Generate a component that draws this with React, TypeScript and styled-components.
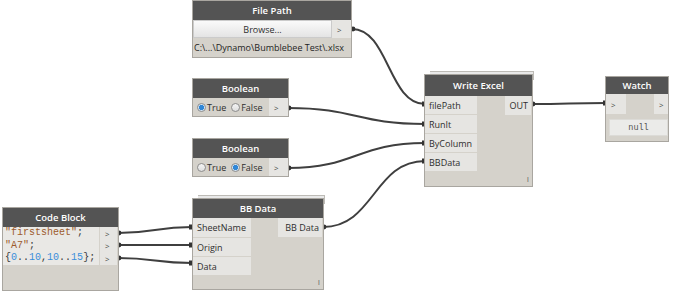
import React from 'react';
import styled, { createGlobalStyle } from 'styled-components';

const GlobalStyle = createGlobalStyle`
  html, body {
    margin: 0;
    padding: 0;
    background: #ffffff;
  }
  body {
    font-family: 'Open Sans', 'Noto Sans', sans-serif;
  }
`;

const Canvas = styled.div`
  position: relative;
  z-index: 0;
  width: 673px;
  height: 291px;
  overflow: hidden;
  background: #ffffff;
  color: #2e2e2e;
  font-size: 9px;
`;

const Wires = styled.svg`
  position: absolute;
  left: 0;
  top: 0;
`;

const Node = styled.div<{ $x: number; $y: number; $w: number; $h: number; $stacked?: boolean }>`
  position: absolute;
  left: ${(p) => p.$x}px;
  top: ${(p) => p.$y}px;
  width: ${(p) => p.$w}px;
  height: ${(p) => p.$h}px;
  box-sizing: border-box;
  background: #d5d2cb;
  border: 1px solid #a9a6a0;
  display: flex;
  flex-direction: column;

  &::before {
    content: '';
    display: ${(p) => (p.$stacked ? 'block' : 'none')};
    position: absolute;
    z-index: -1;
    top: -4px;
    left: 5px;
    right: -2px;
    height: 8px;
    background: #e9e9e9;
    border-top: 1px solid #bdbbb6;
    border-right: 1px solid #bdbbb6;
  }
`;

const Header = styled.div<{ $h: number }>`
  flex: none;
  height: ${(p) => p.$h}px;
  background: #545454;
  color: #ffffff;
  font-size: 9.5px;
  font-weight: 600;
  display: flex;
  align-items: center;
  justify-content: center;
`;

const Body = styled.div`
  display: flex;
  justify-content: space-between;
  align-items: flex-start;
`;

const PortColumn = styled.div<{ $w: number }>`
  width: ${(p) => p.$w}px;
  display: flex;
  flex-direction: column;
  gap: 1px;
  background: #d5d2cb;
`;

const InPort = styled.div<{ $h?: number }>`
  height: ${(p) => p.$h ?? 18}px;
  background: #e6e5e2;
  display: flex;
  align-items: center;
  padding-left: 4px;
  white-space: nowrap;
`;

const OutPort = styled.div<{ $w: number }>`
  width: ${(p) => p.$w}px;
  height: 19px;
  box-sizing: border-box;
  margin-right: 1px;
  background: #e6e5e2;
  display: flex;
  align-items: center;
  justify-content: flex-end;
  padding-right: 3px;
  white-space: nowrap;
`;

const Arrow = styled.div<{ $w: number; $h: number }>`
  flex: none;
  width: ${(p) => p.$w}px;
  height: ${(p) => p.$h}px;
  box-sizing: border-box;
  background: #e6e5e2;
  display: flex;
  align-items: center;
  padding-left: 5px;
  font-size: 8px;
  color: #444;
`;

const Footer = styled.div`
  margin-top: auto;
  display: flex;
  justify-content: flex-end;
  padding: 0 3px 2px 0;
  font-size: 8px;
  color: #666;
  line-height: 10px;
`;

/* File Path */
const BrowseRow = styled.div`
  height: 18px;
  display: flex;
`;

const BrowseButton = styled.div`
  flex: 1;
  box-sizing: border-box;
  background: linear-gradient(#fafafa, #e4e4e4);
  border: 1px solid #cbcbcb;
  display: flex;
  align-items: center;
  justify-content: center;
`;

const PathText = styled.div`
  height: 19px;
  display: flex;
  align-items: center;
  padding-left: 1px;
  white-space: nowrap;
  color: #1e1e1e;
`;

/* Boolean */
const BoolRow = styled.div`
  height: 19px;
  display: flex;
  align-items: center;
`;

const Options = styled.div`
  flex: 1;
  display: flex;
  align-items: center;
  gap: 5px;
  padding-left: 4px;
`;

const Option = styled.label`
  display: flex;
  align-items: center;
  gap: 1px;
`;

const Radio = styled.span<{ $on?: boolean }>`
  width: 9px;
  height: 9px;
  box-sizing: border-box;
  border-radius: 50%;
  border: 1px solid #8d8d8d;
  background: ${(p) =>
    p.$on
      ? 'radial-gradient(circle, #2f86d6 0 2.4px, #cfe3f5 2.9px)'
      : 'linear-gradient(#f4f4f4, #dedede)'};
`;

/* Watch */
const WatchRow = styled.div`
  height: 20px;
  display: flex;
  justify-content: space-between;
`;

const WatchValue = styled.div`
  margin: 5px 0 0 3px;
  height: 17px;
  box-sizing: border-box;
  background: #ebebe9;
  border: 1px solid #dcdbd7;
  display: flex;
  align-items: center;
  justify-content: center;
  font-family: 'Liberation Mono', 'DejaVu Sans Mono', monospace;
  font-size: 8.5px;
  color: #555;
`;

/* Code Block */
const CodeArea = styled.div`
  display: flex;
`;

const CodeLines = styled.div`
  flex: 1;
  background: #e9e8e5;
  font-family: 'Liberation Mono', 'DejaVu Sans Mono', monospace;
  font-size: 10px;
  padding-left: 2px;
`;

const CodeLine = styled.div`
  height: 12.6px;
  line-height: 12.6px;
  white-space: nowrap;
  color: #3a3a3a;
`;

const Str = styled.span`
  color: #9c5b2c;
`;

const Num = styled.span`
  color: #3a8edb;
`;

const CodePorts = styled.div`
  width: 18px;
  display: flex;
  flex-direction: column;
  border-left: 1px solid #d5d2cb;
`;

type Wire = [number, number, number, number];

const wires: Wire[] = [
  [352, 29, 425, 104],
  [288, 108, 425, 124],
  [288, 168, 425, 143],
  [323, 227, 425, 161],
  [532, 104, 606, 103],
  [118, 233, 192, 227],
  [118, 245, 192, 245],
  [118, 258, 192, 263],
];

function wirePath([x1, y1, x2, y2]: Wire) {
  const d = (x2 - x1) / 2;
  return `M${x1} ${y1} C${x1 + d} ${y1} ${x2 - d} ${y2} ${x2} ${y2}`;
}

export default function App() {
  return (
    <>
      <GlobalStyle />
      <Canvas>
        <Wires width={673} height={291}>
          {wires.map((w, i) => (
            <g key={i}>
              <path d={wirePath(w)} fill="none" stroke="#3f3f3f" strokeWidth={2} />
              <circle cx={w[0] + 1} cy={w[1]} r={2.4} fill="#333" />
              <rect x={w[2] - 3} y={w[3] - 2.5} width={3} height={5} fill="#333" />
            </g>
          ))}
        </Wires>

        <Node $x={192} $y={0} $w={160} $h={58}>
          <Header $h={19}>File Path</Header>
          <BrowseRow>
            <BrowseButton>Browse...</BrowseButton>
            <Arrow $w={19} $h={18}>&gt;</Arrow>
          </BrowseRow>
          <PathText>C:\...\Dynamo\Bumblebee Test\.xlsx</PathText>
        </Node>

        <Node $x={192} $y={78} $w={97} $h={39}>
          <Header $h={19}>Boolean</Header>
          <BoolRow>
            <Options>
              <Option><Radio $on />True</Option>
              <Option><Radio />False</Option>
            </Options>
            <Arrow $w={19} $h={18}>&gt;</Arrow>
          </BoolRow>
        </Node>

        <Node $x={192} $y={138} $w={97} $h={39}>
          <Header $h={19}>Boolean</Header>
          <BoolRow>
            <Options>
              <Option><Radio />True</Option>
              <Option><Radio $on />False</Option>
            </Options>
            <Arrow $w={19} $h={18}>&gt;</Arrow>
          </BoolRow>
        </Node>

        <Node $x={424} $y={74} $w={109} $h={113} $stacked>
          <Header $h={21}>Write Excel</Header>
          <Body>
            <PortColumn $w={52}>
              <InPort>filePath</InPort>
              <InPort>RunIt</InPort>
              <InPort>ByColumn</InPort>
              <InPort>BBData</InPort>
            </PortColumn>
            <OutPort $w={26}>OUT</OutPort>
          </Body>
          <Footer>I</Footer>
        </Node>

        <Node $x={605} $y={76} $w={64} $h={66}>
          <Header $h={17}>Watch</Header>
          <WatchRow>
            <Arrow $w={20} $h={20}>&gt;</Arrow>
            <Arrow $w={14} $h={20}>&gt;</Arrow>
          </WatchRow>
          <WatchValue>null</WatchValue>
        </Node>

        <Node $x={2} $y={207} $w={117} $h={84}>
          <Header $h={19}>Code Block</Header>
          <CodeArea>
            <CodeLines>
              <CodeLine><Str>"firstsheet"</Str>;</CodeLine>
              <CodeLine><Str>"A7"</Str>;</CodeLine>
              <CodeLine>
                {'{'}<Num>0</Num>..<Num>10</Num>,<Num>10</Num>..<Num>15</Num>{'};'}
              </CodeLine>
            </CodeLines>
            <CodePorts>
              <Arrow $w={17} $h={12.6}>&gt;</Arrow>
              <Arrow $w={17} $h={12.6}>&gt;</Arrow>
              <Arrow $w={17} $h={12.6}>&gt;</Arrow>
            </CodePorts>
          </CodeArea>
        </Node>

        <Node $x={192} $y={198} $w={132} $h={92} $stacked>
          <Header $h={19}>BB Data</Header>
          <Body>
            <PortColumn $w={58}>
              <InPort $h={19}>SheetName</InPort>
              <InPort $h={18}>Origin</InPort>
              <InPort $h={18}>Data</InPort>
            </PortColumn>
            <OutPort $w={44}>BB Data</OutPort>
          </Body>
          <Footer>I</Footer>
        </Node>
      </Canvas>
    </>
  );
}
